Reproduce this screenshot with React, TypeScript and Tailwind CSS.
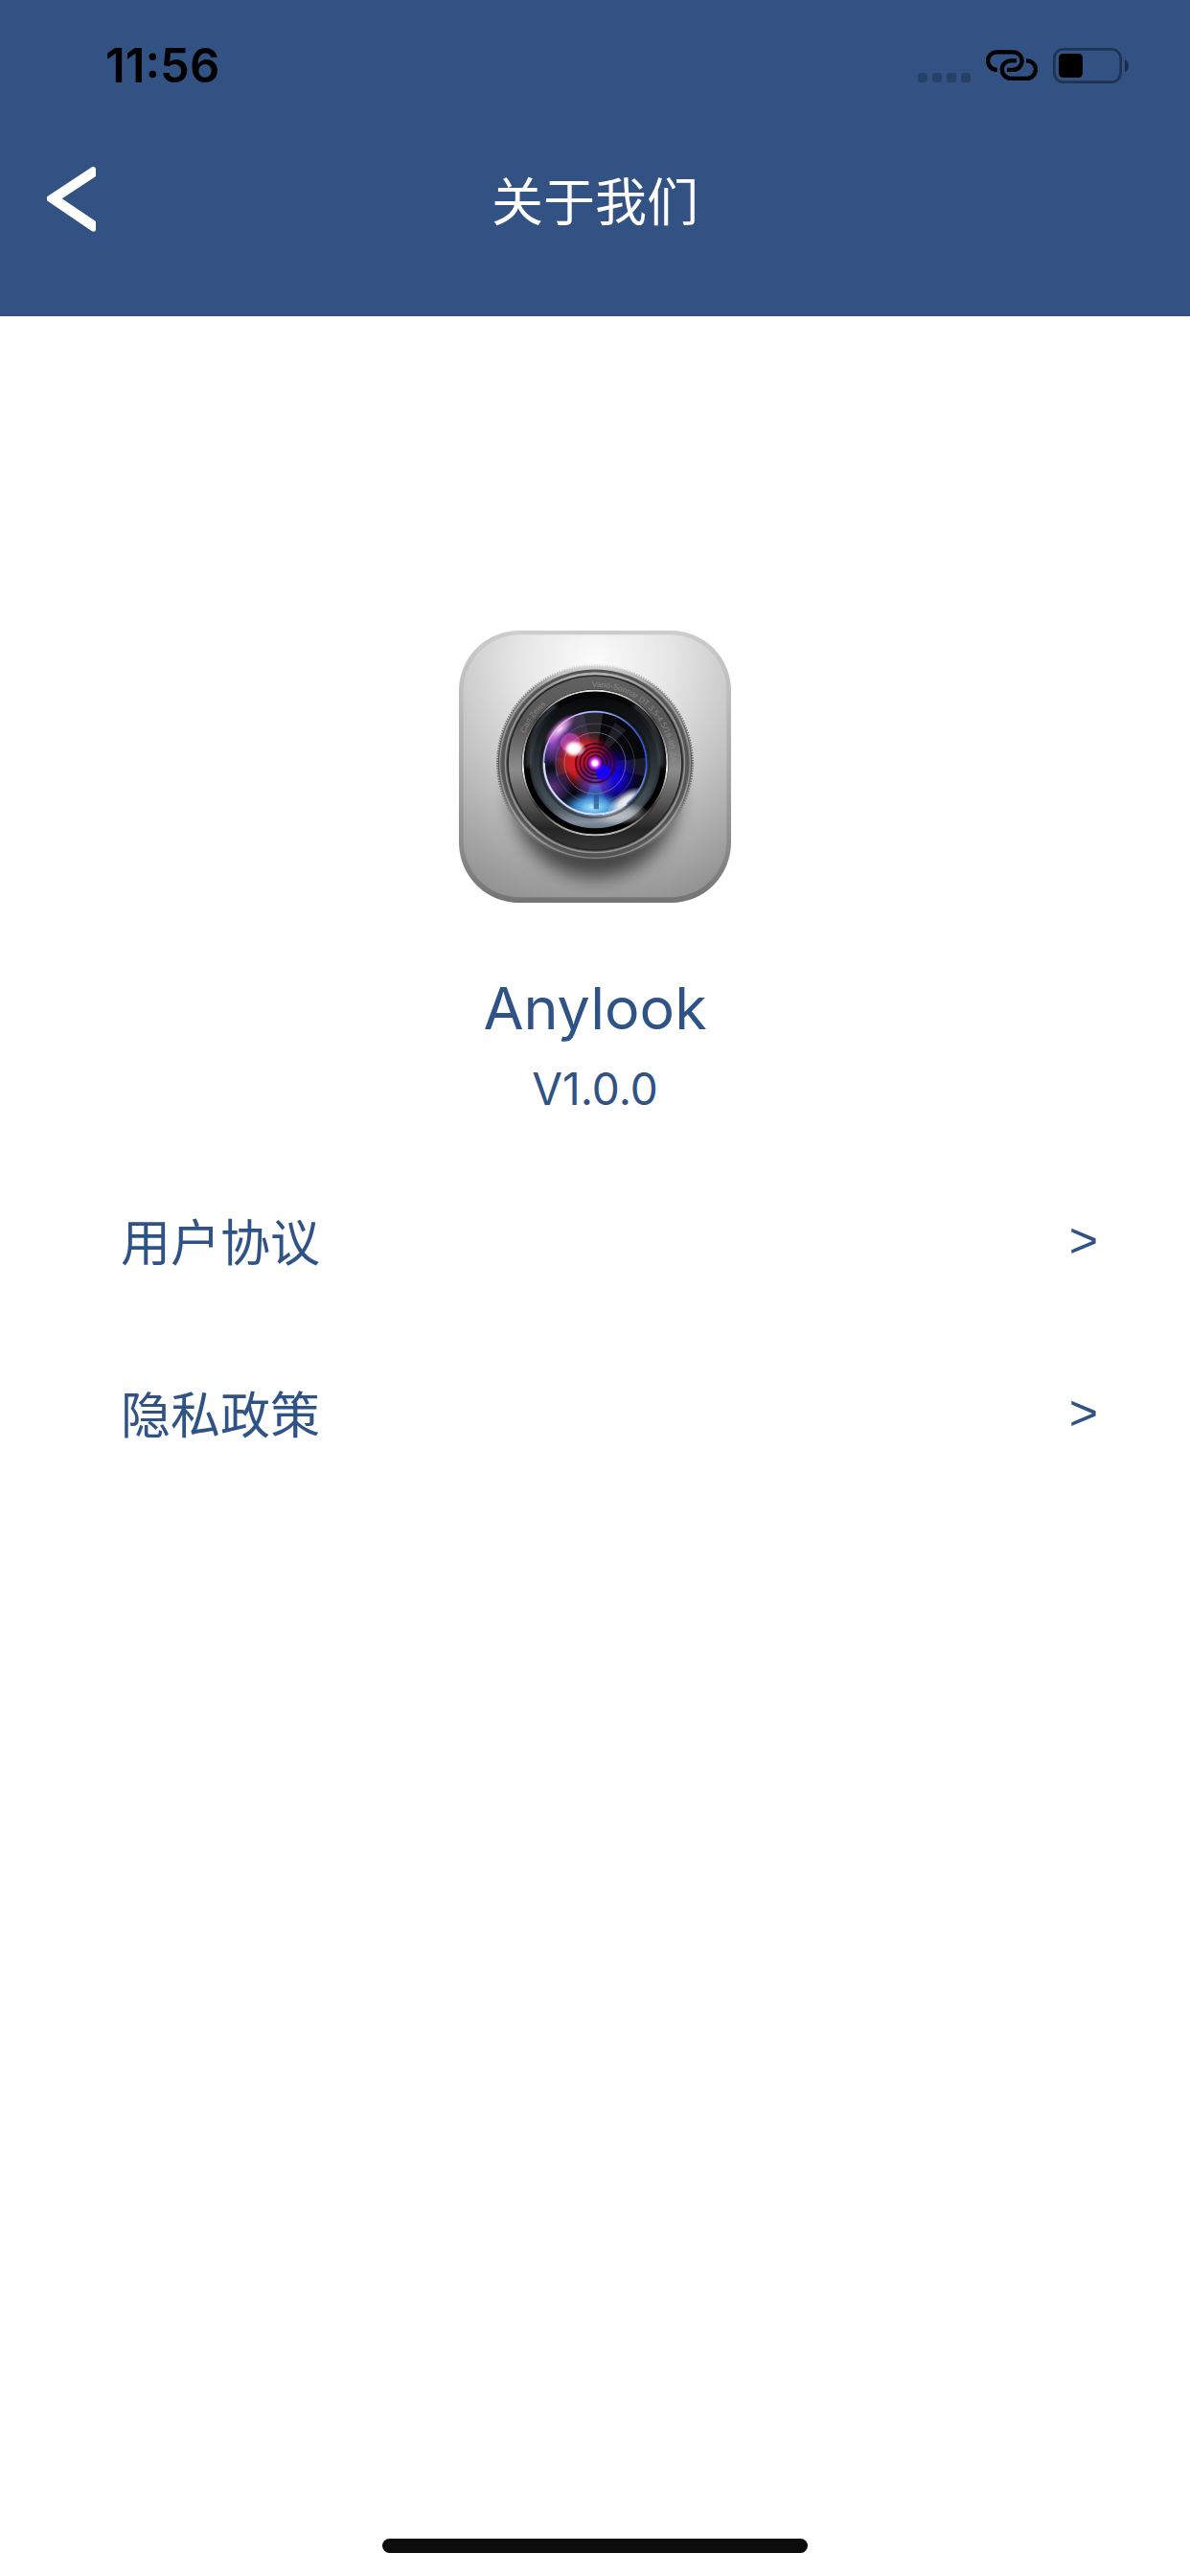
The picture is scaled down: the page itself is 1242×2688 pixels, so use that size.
import React from "react";

const LATIN = "font-['Inter',sans-serif]";

function Signal() {
  return (
    <svg className="mt-[25px] h-[10px] w-[55px]" viewBox="0 0 55 10" fill="#000" fillOpacity="0.22" aria-hidden="true">
      <rect x="0" width="10" height="10" rx="3" />
      <rect x="15" width="10" height="10" rx="3" />
      <rect x="30" width="10" height="10" rx="3" />
      <rect x="45" width="10" height="10" rx="3" />
    </svg>
  );
}

function Hotspot() {
  return (
    <svg className="h-8 w-[54px]" viewBox="0 0 162 96" fill="none" stroke="#000" strokeWidth="13" aria-hidden="true">
      <path d="M36 62.500H34A27 27 0 0 1 34 7H85A27 27 0 0 1 85 62.500H66" />
      <path d="M96 34H78A27 27 0 0 0 78 89.500H128A27 27 0 0 0 128 34H126" />
    </svg>
  );
}

function Battery() {
  return (
    <svg className="h-[37px] w-[79px]" viewBox="0 0 237 111" aria-hidden="true">
      <rect x="4" y="4" width="208" height="103" rx="29" fill="none" stroke="#000" strokeOpacity="0.38" strokeWidth="8" />
      <rect x="18" y="18" width="75" height="75" rx="14" fill="#000" />
      <path d="M225 36Q237 42 237 56Q237 70 225 76Z" fill="#000" fillOpacity="0.45" />
    </svg>
  );
}

function AppIcon() {
  return (
    <svg className="size-[284px]" viewBox="27 53 852 852" role="img" aria-label="Anylook">
      <defs>
        <radialGradient id="body" gradientUnits="userSpaceOnUse" cx="453" cy="150" r="790">
          <stop offset="0" stopColor="#fbfbfb" />
          <stop offset="0.3" stopColor="#e6e6e6" />
          <stop offset="0.6" stopColor="#c4c4c4" />
          <stop offset="1" stopColor="#929292" />
        </radialGradient>
        <linearGradient id="edge" x1="0" y1="0" x2="0" y2="1">
          <stop offset="0" stopColor="#cdcdcd" />
          <stop offset="0.5" stopColor="#a9a9a9" />
          <stop offset="1" stopColor="#747474" />
        </linearGradient>
        <linearGradient id="rim" x1="0" y1="0" x2="0" y2="1">
          <stop offset="0" stopColor="#d8d8d8" />
          <stop offset="0.12" stopColor="#858585" />
          <stop offset="0.5" stopColor="#5c5c5c" />
          <stop offset="0.85" stopColor="#808080" />
          <stop offset="1" stopColor="#4a4a4a" />
        </linearGradient>
        <linearGradient id="face" x1="0" y1="0" x2="0" y2="1">
          <stop offset="0" stopColor="#626262" />
          <stop offset="0.28" stopColor="#555" />
          <stop offset="0.54" stopColor="#8c8c8c" />
          <stop offset="0.72" stopColor="#585858" />
          <stop offset="0.88" stopColor="#242424" />
          <stop offset="1" stopColor="#373737" />
        </linearGradient>
        <linearGradient id="bezel" x1="0" y1="0" x2="0" y2="1">
          <stop offset="0" stopColor="#e6e2de" />
          <stop offset="0.2" stopColor="#4d4945" />
          <stop offset="0.55" stopColor="#efefef" />
          <stop offset="0.8" stopColor="#35302c" />
          <stop offset="1" stopColor="#c6c0ba" />
        </linearGradient>
        <linearGradient id="barrel" x1="0" y1="0" x2="0" y2="1">
          <stop offset="0" stopColor="#050607" />
          <stop offset="0.2" stopColor="#121518" />
          <stop offset="0.6" stopColor="#333c43" />
          <stop offset="0.82" stopColor="#4b565f" />
          <stop offset="0.91" stopColor="#8591a0" />
          <stop offset="1" stopColor="#4d5760" />
        </linearGradient>
        <linearGradient id="glassRim" x1="0" y1="0" x2="1" y2="1">
          <stop offset="0" stopColor="#f3b8f2" />
          <stop offset="0.25" stopColor="#a8b9f5" />
          <stop offset="0.5" stopColor="#3f63d8" />
          <stop offset="0.75" stopColor="#2553ec" />
          <stop offset="1" stopColor="#fff" />
        </linearGradient>
        <radialGradient id="red">
          <stop offset="0" stopColor="#f51a28" />
          <stop offset="0.55" stopColor="#e02326" stopOpacity="0.85" />
          <stop offset="1" stopColor="#93101c" stopOpacity="0" />
        </radialGradient>
        <radialGradient id="blue">
          <stop offset="0" stopColor="#0b00ff" />
          <stop offset="0.4" stopColor="#1400e0" stopOpacity="0.85" />
          <stop offset="1" stopColor="#0a0090" stopOpacity="0" />
        </radialGradient>
        <radialGradient id="violet">
          <stop offset="0" stopColor="#a050d0" />
          <stop offset="0.6" stopColor="#5b3ea0" stopOpacity="0.6" />
          <stop offset="1" stopColor="#28286c" stopOpacity="0" />
        </radialGradient>
        <radialGradient id="pink">
          <stop offset="0" stopColor="#ffe9ff" />
          <stop offset="0.5" stopColor="#ee9bea" stopOpacity="0.65" />
          <stop offset="1" stopColor="#c75bd4" stopOpacity="0" />
        </radialGradient>
        <radialGradient id="cyan">
          <stop offset="0" stopColor="#b5efff" />
          <stop offset="0.5" stopColor="#4ba8f0" stopOpacity="0.85" />
          <stop offset="1" stopColor="#2060c8" stopOpacity="0" />
        </radialGradient>
        <radialGradient id="white">
          <stop offset="0" stopColor="#fff" />
          <stop offset="0.45" stopColor="#fff" stopOpacity="0.85" />
          <stop offset="1" stopColor="#fff" stopOpacity="0" />
        </radialGradient>
        <radialGradient id="core">
          <stop offset="0" stopColor="#fff" />
          <stop offset="0.3" stopColor="#fff" />
          <stop offset="0.55" stopColor="#d93cff" />
          <stop offset="1" stopColor="#8a00e0" stopOpacity="0" />
        </radialGradient>
        <filter id="blur30" x="-30%" y="-30%" width="160%" height="160%">
          <feGaussianBlur stdDeviation="30" />
        </filter>
        <filter id="blur8" x="-30%" y="-30%" width="160%" height="160%">
          <feGaussianBlur stdDeviation="7" />
        </filter>
        <clipPath id="bodyClip">
          <rect x="27" y="53" width="852" height="852" rx="188" />
        </clipPath>
        <clipPath id="barrelClip">
          <circle cx="453" cy="467" r="222" />
        </clipPath>
        <clipPath id="glassClip">
          <circle cx="453" cy="468" r="160" />
        </clipPath>
        <path id="engraving" d="M215 467A238 238 0 0 1 691 467A238 238 0 0 1 453 705" />
      </defs>

      <rect x="27" y="53" width="852" height="852" rx="188" fill="url(#edge)" />
      <rect x="41" y="66" width="824" height="822" rx="176" fill="url(#body)" />

      <g clipPath="url(#bodyClip)">
        <ellipse cx="453" cy="570" rx="258" ry="256" fill="#000" fillOpacity="0.62" filter="url(#blur30)" />
      </g>

      <circle cx="453" cy="467" r="304" fill="url(#rim)" />
      <circle cx="453" cy="467" r="305" fill="none" stroke="url(#rim)" strokeWidth="7" strokeDasharray="4 4" />
      <circle cx="453" cy="467" r="298" fill="none" stroke="#d0d0d0" strokeOpacity="0.45" strokeWidth="4" />
      <circle cx="453" cy="467" r="288" fill="none" stroke="#555" strokeWidth="9" />
      <circle cx="453" cy="467" r="281" fill="none" stroke="#a5a5a5" strokeOpacity="0.75" strokeWidth="4" />
      <circle cx="453" cy="467" r="273" fill="url(#face)" stroke="#262626" strokeWidth="5" />
      <text className="font-['Liberation_Sans',sans-serif]" fontSize="25" fill="#929292" fillOpacity="0.85">
        <textPath href="#engraving" startOffset="95">Carl Zeiss</textPath>
      </text>
      <text className="font-['Liberation_Sans',sans-serif]" fontSize="25" fill="#929292" fillOpacity="0.85">
        <textPath href="#engraving" startOffset="364">Vario-Sonnar DT 3,5-4,5/16-80 ZA</textPath>
      </text>

      <circle cx="453" cy="467" r="230" fill="#111" />
      <circle cx="453" cy="467" r="226" fill="url(#barrel)" stroke="url(#bezel)" strokeWidth="6" />
      <circle cx="453" cy="467" r="214" fill="none" stroke="#050505" strokeWidth="18" />
      <g clipPath="url(#barrelClip)">
        <path d="M238 420Q250 600 380 668L400 690Q240 640 230 480Z" fill="#000" fillOpacity="0.6" filter="url(#blur8)" />
        <path d="M668 420Q656 600 526 668L506 690Q666 640 676 480Z" fill="#000" fillOpacity="0.6" filter="url(#blur8)" />
        <path d="M244 480Q244 350 330 285" fill="none" stroke="#59646d" strokeWidth="12" strokeOpacity="0.7" filter="url(#blur8)" />
        <path d="M662 480Q662 350 576 285" fill="none" stroke="#59646d" strokeWidth="12" strokeOpacity="0.7" filter="url(#blur8)" />
        <ellipse cx="525" cy="625" rx="100" ry="36" fill="url(#white)" fillOpacity="0.55" />
      </g>
      <circle cx="453" cy="468" r="170" fill="none" stroke="#0a0c10" strokeOpacity="0.4" strokeWidth="8" />

      <circle cx="453" cy="468" r="163" fill="#07070c" />
      <g clipPath="url(#glassClip)">
        <path d="M453 468L320 330L400 290L430 300Z" fill="#413853" fillOpacity="0.85" />
        <path d="M453 468L415 300H480Z" fill="#26262c" />
        <path d="M453 468L515 340L550 365Z" fill="#1d1e26" />
        <path d="M453 468L330 450V510Z" fill="#33282c" />
        <path d="M453 468L625 450V515Z" fill="#1c1d24" />
        <circle cx="318" cy="400" r="88" fill="url(#violet)" />
        <circle cx="415" cy="458" r="96" fill="url(#red)" />
        <circle cx="500" cy="512" r="98" fill="url(#blue)" />
        <circle cx="453" cy="535" r="70" fill="url(#violet)" fillOpacity="0.8" />
        <circle cx="320" cy="545" r="70" fill="url(#violet)" fillOpacity="0.6" />
        <path d="M453 500L400 640H510Z" fill="#2588e6" fillOpacity="0.4" />
        <ellipse cx="448" cy="606" rx="108" ry="50" fill="url(#cyan)" />
        <path d="M449 560H465V612H449Z" fill="#28518d" fillOpacity="0.75" />
        <circle cx="453" cy="468" r="96" fill="none" stroke="#b9a4a9" strokeOpacity="0.5" strokeWidth="3" />
        <circle cx="453" cy="468" r="124" fill="none" stroke="#868ca0" strokeOpacity="0.35" strokeWidth="3" />
        <circle cx="376" cy="404" r="31" fill="#d84ec4" fillOpacity="0.6" />
        <circle cx="455" cy="470" r="66" fill="#7a0050" fillOpacity="0.35" />
        <g fill="none" stroke="#15000d" strokeOpacity="0.7" strokeWidth="5">
          <circle cx="454" cy="468" r="24" />
          <circle cx="454" cy="468" r="36" />
          <circle cx="454" cy="468" r="48" />
          <circle cx="454" cy="468" r="61" />
        </g>
        <circle cx="479" cy="497" r="23" fill="#1600ff" fillOpacity="0.9" />
        <ellipse cx="554" cy="591" rx="72" ry="36" transform="rotate(-32 554 591)" fill="url(#white)" />
      </g>
      <circle cx="453" cy="468" r="161" fill="none" stroke="url(#glassRim)" strokeWidth="5" />
      <path d="M294 468A159 159 0 0 0 453 628Q510 628 552 595" fill="none" stroke="#e9f4ff" strokeOpacity="0.85" strokeWidth="6" />
      <ellipse cx="343" cy="362" rx="66" ry="25" transform="rotate(-45 343 362)" fill="url(#pink)" />
      <ellipse cx="392" cy="423" rx="33" ry="26" fill="url(#white)" />
      <circle cx="382" cy="423" r="19" fill="#fff" filter="url(#blur8)" />
      <circle cx="453" cy="468" r="25" fill="url(#core)" />
    </svg>
  );
}

function Row({ label }: { label: string }) {
  return (
    <li>
      <a href="#" className="flex h-[180px] items-center justify-between pr-24 pl-[126px]">
        <span className="text-[52px] leading-none">{label}</span>
        <span className="font-['Liberation_Sans',sans-serif] text-[52px] leading-none">&gt;</span>
      </a>
    </li>
  );
}

export default function App() {
  return (
    <div lang="zh-CN" className="flex min-h-screen flex-col bg-white font-['Noto_Sans_CJK_SC',sans-serif] text-[#305385]">
      <header className="bg-[#325283] pb-[50px]">
        <div className="flex h-[136px] items-center justify-between pr-16 pl-[110px] text-black">
          <time className={`${LATIN} text-[49px] leading-none font-semibold`}>11:56</time>
          <div className="flex items-center gap-4">
            <Signal />
            <Hotspot />
            <Battery />
          </div>
        </div>
        <nav className="grid h-[144px] grid-cols-[1fr_auto_1fr] items-center px-12">
          <button type="button" aria-label="返回" className="justify-self-start">
            <svg className="h-[68px] w-[52px]" viewBox="144 526 156 204" fill="#fff" aria-hidden="true">
              <path d="M147 620L288 527Q297 524 300 532V556L194 626L300 697V724Q297 731 288 728L147 632Z" />
            </svg>
          </button>
          <h1 className="text-[54px] leading-none text-white">关于我们</h1>
        </nav>
      </header>

      <main className="flex flex-1 flex-col pt-[328px]">
        <div className={`${LATIN} flex flex-col items-center`}>
          <AppIcon />
          <h2 className="mt-[70px] text-[61px] leading-[80px]">Anylook</h2>
          <p className="mt-3 text-[46px] leading-[64px]">V1.0.0</p>
        </div>
        <ul className="mt-9">
          <Row label="用户协议" />
          <Row label="隐私政策" />
        </ul>
      </main>

      <footer className="flex justify-center pb-6">
        <div className="h-[15px] w-[444px] rounded-full bg-[#0c0c0c]" />
      </footer>
    </div>
  );
}
